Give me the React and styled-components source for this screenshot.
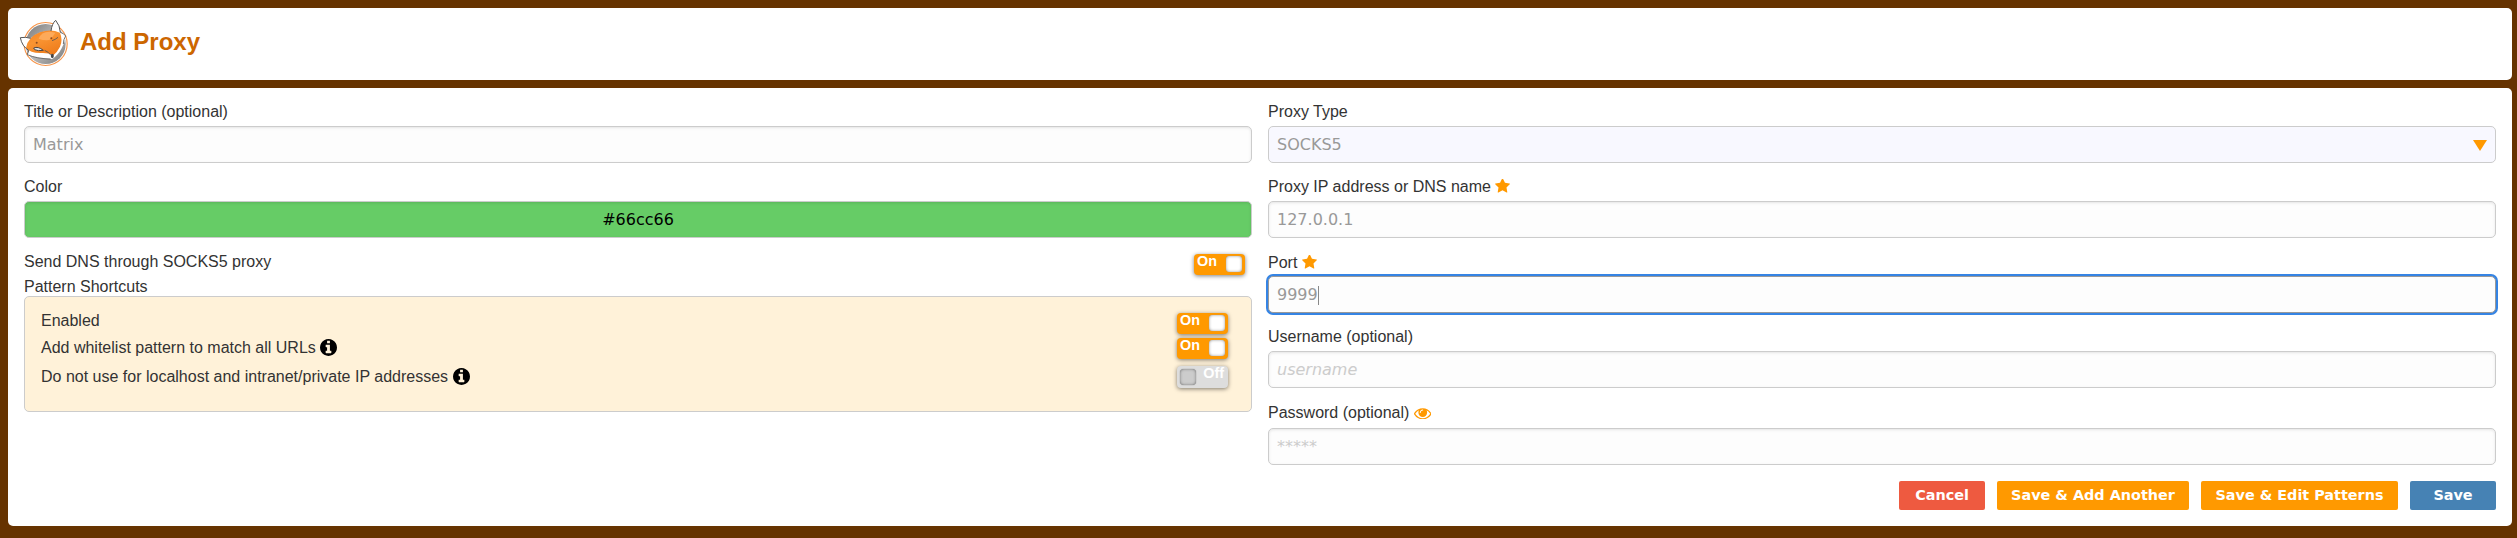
import React from 'react';
import styled, { createGlobalStyle, css } from 'styled-components';

const GlobalStyle = createGlobalStyle`
  *, *::before, *::after { box-sizing: border-box; }
  body {
    margin: 0;
    background: #630;
    color: #333;
    font: 16px/18px "Liberation Sans", Arial, sans-serif;
  }
`;

const Page = styled.div`
  display: flex;
  flex-direction: column;
  gap: 8px;
  height: 538px;
  padding: 8px 5px 12px 8px;
`;

const Card = styled.section`
  background: #fff;
  border-radius: 5px;
`;

const Header = styled(Card).attrs({ as: 'header' })`
  display: flex;
  align-items: center;
  gap: 11px;
  height: 72px;
  padding: 0 11px 2px;
`;

const Title = styled.h1`
  margin: 0;
  padding-bottom: 2px;
  color: #c60;
  font-size: 24px;
  line-height: 28px;
`;

const Form = styled(Card)`
  flex: 1;
  display: grid;
  grid-template-columns: 1fr 1fr;
  gap: 16px;
  padding: 14px 16px 0;
`;

const Column = styled.div`
  display: flex;
  flex-direction: column;
`;

const Label = styled.label`
  display: flex;
  align-items: center;
  gap: 4.45px;
  height: ${(p) => p.$height || 24}px;
  padding-bottom: ${(p) => p.$lift || 4}px;
`;

const Field = styled.div`
  display: flex;
  align-items: center;
  flex: none;
  height: 37px;
  padding: 1px 8px 0;
  margin-bottom: 14px;
  border: 1px solid #ccc;
  border-radius: 5px;
  background: #fdfdfd;
  box-shadow: inset 0 1px 3px #e4e4e4;
  color: #999;
  font: 16px/20px "DejaVu Sans", sans-serif;

  ${(p) => p.$hint && css`color: #ccc;`}
  ${(p) => p.$italic && css`font-style: italic;`}
  ${(p) => p.$select && css`
    justify-content: space-between;
    background: #f8f8ff;
    box-shadow: none;
  `}
  ${(p) => p.$focused && css`
    border-color: #999;
    box-shadow: 0 0 0 2px #3584e4;
  `}
  ${(p) => p.$swatch && css`
    justify-content: center;
    background: #6c6;
    color: #000;
    box-shadow: inset 0 1px 3px rgba(0, 0, 0, 0.12);
  `}
`;

const Caret = styled.span`
  width: 1px;
  height: 19px;
  background: #888;
`;

const Row = styled.div`
  display: flex;
  justify-content: space-between;
  align-items: flex-start;
  height: ${(p) => p.$height}px;
  padding-right: ${(p) => p.$inset || 0}px;
`;

const RowText = styled.span`
  display: flex;
  align-items: center;
  gap: 4.45px;
  height: 18px;
  margin-top: ${(p) => p.$top || 0}px;
`;

const Shortcuts = styled.div`
  height: 116px;
  padding: 16px;
  border: 1px solid #ccc;
  border-radius: 5px;
  background: #fff2d9;
`;

const Switch = styled.span`
  display: flex;
  flex-direction: ${(p) => (p.$on ? 'row' : 'row-reverse')};
  justify-content: space-between;
  width: 51px;
  height: ${(p) => (p.$on ? 21 : 22)}px;
  margin-top: ${(p) => p.$top || 0}px;
  padding: ${(p) => (p.$on ? '2px 3px 0 3px' : '3px 4px 0 3px')};
  border-radius: 4px;
  background: ${(p) => (p.$on ? '#f90' : '#ddd')};
  box-shadow: 0 1px 4px rgba(0, 0, 0, 0.5);
  color: #fff;
  font-size: 14.4px;
  font-weight: bold;
  line-height: 16px;
`;

const SwitchText = styled.span`
  margin-top: ${(p) => (p.$on ? -3 : -4)}px;
`;

const Knob = styled.span`
  width: 16px;
  height: 16px;
  border-radius: 4px;
  background: ${(p) => (p.$on ? '#fff' : '#ccc')};
  box-shadow: ${(p) => (p.$on
    ? 'inset 0 0 3px #999, 0 0 1px #999'
    : 'inset 0 0 3px #777, 0 0 1px #555')};
`;

const Actions = styled.div`
  display: flex;
  justify-content: flex-end;
  gap: 12px;
  margin-top: 2px;
`;

const Button = styled.button`
  width: ${(p) => p.$width}px;
  height: 29px;
  padding: 0 0 1px;
  border: 0;
  border-radius: 2px;
  background: ${(p) => p.$color};
  color: #fff;
  font: bold 14.4px/17px "DejaVu Sans", sans-serif;
  white-space: nowrap;
`;

const Icon = styled.svg`
  flex: none;
  margin-top: ${(p) => p.$down || 0}px;
  margin-bottom: ${(p) => p.$up || 0}px;
`;

const StarIcon = () => (
  <Icon $up={2} width="15" height="14.4" viewBox="64 110 1664 1600" fill="#f90">
    <path d="M1728 647q0 22-26 48l-363 354 86 500q1 7 1 20 0 21-10.5 35.5t-30.5 14.5q-19 0-40-12l-449-236-449 236q-22 12-40 12-21 0-31.5-14.5t-10.5-35.5q0-6 2-20l86-500-364-354q-25-27-25-48 0-37 56-46l502-73 225-455q19-41 49-41t49 41l225 455 502 73q56 9 56 46z" />
  </Icon>
);

const EyeIcon = () => (
  <Icon $down={2} width="17.5" height="11.6" viewBox="0 384 1792 1152" fill="#f90">
    <path d="M1664 960q-152-236-381-353 61 104 61 225 0 185-131.5 316.5t-316.5 131.5-316.5-131.5-131.5-316.5q0-121 61-225-229 117-381 353 133 205 333.5 326.5t434.5 121.5 434.5-121.5 333.5-326.5zM944 576q0-20-14-34t-34-14q-125 0-214.5 89.5t-89.5 214.5q0 20 14 34t34 14 34-14 14-34q0-86 61-147t147-61q20 0 34-14t14-34zM1792 960q0 34-20 69-140 230-376.5 368.5t-499.5 138.5-499.5-139-376.5-368q-20-35-20-69t20-69q140-229 376.5-368t499.5-139 499.5 139 376.5 368q20 35 20 69z" fillRule="evenodd" />
  </Icon>
);

const InfoIcon = () => (
  <Icon $up={2} width="17" height="17" viewBox="128 128 1536 1536" fill="#000">
    <path d="M1152 1376v-160q0-14-9-23t-23-9h-96v-512q0-14-9-23t-23-9h-320q-14 0-23 9t-9 23v160q0 14 9 23t23 9h96v320h-96q-14 0-23 9t-9 23v160q0 14 9 23t23 9h448q14 0 23-9t9-23zm-128-896v-160q0-14-9-23t-23-9h-192q-14 0-23 9t-9 23v160q0 14 9 23t23 9h192q14 0 23-9t9-23zm640 416q0 209-103 385.5t-279.5 279.5-385.5 103-385.5-103-279.5-279.5-103-385.5 103-385.5 279.5-279.5 385.5-103 385.5 103 279.5 279.5 103 385.5z" />
  </Icon>
);

function FoxLogo() {
  return (
    <svg width="50" height="48" viewBox="57 57 150 144">
      <defs>
        <linearGradient id="disc" x1="0" y1="0" x2="1" y2="1">
          <stop offset="0" stopColor="#777" />
          <stop offset="0.5" stopColor="#bbb" />
          <stop offset="1" stopColor="#777" />
        </linearGradient>
        <linearGradient id="fur" x1="0" y1="0" x2="0.6" y2="1">
          <stop offset="0" stopColor="#f58220" />
          <stop offset="0.45" stopColor="#f99432" />
          <stop offset="1" stopColor="#ef7d1c" />
        </linearGradient>
      </defs>
      <circle cx="137" cy="132" r="64.5" fill="#fff" stroke="#f7954a" strokeWidth="3.5" />
      <circle cx="137" cy="132" r="60" fill="url(#disc)" />
      <path d="M61 113 Q78 110 92 115 Q118 92 153 93 Q156 70 167 61 Q180 76 181 97 Q192 100 197 108 Q196 127 185 145 Q174 166 157 177 Q120 178 82 164 L86 151 Q66 139 61 113Z" fill="#fff" />
      <path d="M78 144 Q84 110 120 97 Q152 86 180 98 Q189 120 180 140 Q172 156 160 166 Q146 158 124 159 Q92 160 78 144Z" fill="url(#fur)" />
      <path d="M116 116 Q124 94 150 95 L166 98 Q158 112 148 120 Q132 122 116 116Z" fill="#fdaa5a" />
      <path d="M61 113 Q78 110 92 115 M61 113 Q66 139 86 151 L82 164 M153 93 Q156 70 167 61 Q180 76 181 97" fill="none" stroke="#555" strokeWidth="3" />
      <path d="M101 144 Q114 138 130 151 Q114 154 104 149Z" fill="#ddd" stroke="#4b4440" strokeWidth="3" />
      <path d="M156 122 Q166 119 174 112 M134 151 Q146 156 153 166 M82 164 Q110 176 152 177 M181 97 Q192 100 197 108 Q190 118 190 132" fill="none" stroke="#555" strokeWidth="2.5" />
      <ellipse cx="157" cy="168" rx="4.5" ry="6.5" fill="#444" />
      <circle cx="110" cy="128" r="3" fill="#8d4a1c" />
      <circle cx="154" cy="115" r="3" fill="#8d4a1c" />
    </svg>
  );
}

function Toggle({ on, top }) {
  return (
    <Switch $on={on} $top={top}>
      <SwitchText $on={on}>{on ? 'On' : 'Off'}</SwitchText>
      <Knob $on={on} />
    </Switch>
  );
}

export default function App() {
  return (
    <>
      <GlobalStyle />
      <Page>
        <Header>
          <FoxLogo />
          <Title>Add Proxy</Title>
        </Header>
        <Form>
          <Column>
            <Label>Title or Description (optional)</Label>
            <Field>Matrix</Field>
            <Label>Color</Label>
            <Field $swatch>#66cc66</Field>
            <Row $height={25} $inset={7}>
              <RowText $top={1}>Send DNS through SOCKS5 proxy</RowText>
              <Toggle on top={2} />
            </Row>
            <Row $height={19}>
              <RowText $top={1}>Pattern Shortcuts</RowText>
            </Row>
            <Shortcuts>
              <Row $height={25} $inset={7}>
                <RowText $top={-1}>Enabled</RowText>
                <Toggle on />
              </Row>
              <Row $height={28} $inset={7}>
                <RowText $top={1}>
                  Add whitelist pattern to match all URLs
                  <InfoIcon />
                </RowText>
                <Toggle on />
              </Row>
              <Row $height={29} $inset={7}>
                <RowText $top={2}>
                  Do not use for localhost and intranet/private IP addresses
                  <InfoIcon />
                </RowText>
                <Toggle />
              </Row>
            </Shortcuts>
          </Column>
          <Column>
            <Label>Proxy Type</Label>
            <Field $select>
              SOCKS5
              <svg width="14" height="11" viewBox="0 0 14 11">
                <path d="M0 0H14L7 11Z" fill="#f90" />
              </svg>
            </Field>
            <Label>
              Proxy IP address or DNS name
              <StarIcon />
            </Label>
            <Field>127.0.0.1</Field>
            <Label $lift={2}>
              Port
              <StarIcon />
            </Label>
            <Field $focused>
              9999
              <Caret />
            </Field>
            <Label>Username (optional)</Label>
            <Field $hint $italic>username</Field>
            <Label $height={26} $lift={5}>
              Password (optional)
              <EyeIcon />
            </Label>
            <Field $hint>*****</Field>
            <Actions>
              <Button $width={86} $color="#ee5a40">Cancel</Button>
              <Button $width={192} $color="#f90">Save &amp; Add Another</Button>
              <Button $width={197} $color="#f90">Save &amp; Edit Patterns</Button>
              <Button $width={86} $color="#4682b4">Save</Button>
            </Actions>
          </Column>
        </Form>
      </Page>
    </>
  );
}
